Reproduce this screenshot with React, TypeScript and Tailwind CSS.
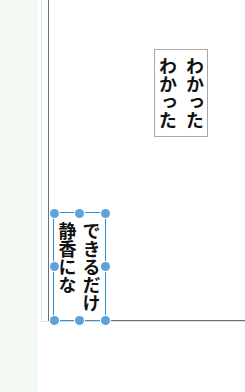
import React from 'react';

const jp = "font-['Noto_Sans_CJK_JP','Noto_Sans',sans-serif]";

const Handle: React.FC<{ x: string; y: string }> = ({ x, y }) => (
  <span className={`absolute ${x} ${y} w-[9px] h-[9px] -ml-[4.5px] -mt-[4.5px] rounded-full bg-[#5aa3dc] ring-1 ring-white`} />
);

const App: React.FC = () => {
  return (
    <div className="flex w-[245px] h-[392px] bg-white overflow-hidden">
      <div className="w-[38px] shrink-0 bg-[#f2f8f2]" />
      <div className="flex-1 pl-[3px]">
        <div className="h-[322px] border-l border-b border-[#dcdce6] pl-[6px]">
          <div className="relative h-[321px] border-l border-b border-[#6e6e76]">
            <div
              className={`absolute left-[105px] top-[49px] w-[54px] h-[88px] border border-[#a8a8a8] bg-white ${jp} font-bold text-[18px] leading-[27px] text-[#111] [writing-mode:vertical-rl] flex items-center justify-center`}
            >
              わかった<br />わかった
            </div>

            <div className="absolute left-[4px] top-[212px] w-[53px] h-[109px] border border-[#3b8fc6]">
              <div
                className={`w-full h-full ${jp} font-bold text-[18px] leading-[24px] text-[#111] [writing-mode:vertical-rl] flex items-center justify-center`}
              >
                できるだけ<br />静香にな
              </div>
              <Handle x="left-0" y="top-0" />
              <Handle x="left-1/2" y="top-0" />
              <Handle x="left-full" y="top-0" />
              <Handle x="left-0" y="top-1/2" />
              <Handle x="left-full" y="top-1/2" />
              <Handle x="left-0" y="top-full" />
              <Handle x="left-1/2" y="top-full" />
              <Handle x="left-full" y="top-full" />
            </div>
          </div>
        </div>
      </div>
    </div>
  );
};

export default App;
